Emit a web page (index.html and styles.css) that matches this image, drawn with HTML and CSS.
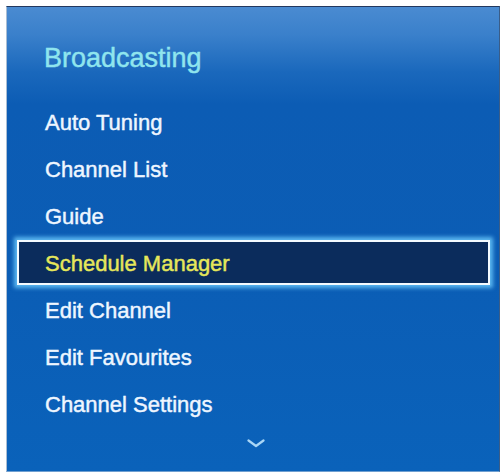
FILE: index.html
```html
<!DOCTYPE html>
<html lang="en">
<head>
<meta charset="utf-8">
<title>Broadcasting</title>
<link rel="stylesheet" href="styles.css">
</head>
<body>
<div class="panel">
  <div class="title">Broadcasting</div>
  <ul class="menu">
    <li class="item">Auto Tuning</li>
    <li class="item">Channel List</li>
    <li class="item">Guide</li>
    <li class="item selected">Schedule Manager</li>
    <li class="item">Edit Channel</li>
    <li class="item">Edit Favourites</li>
    <li class="item">Channel Settings</li>
  </ul>
  <div class="more">
    <svg class="chevron" width="18" height="9" viewBox="0 0 18 9"><polyline points="1.5,1.5 9,7 16.5,1.5" fill="none" stroke="#a9d6f6" stroke-width="2.2" stroke-linecap="round" stroke-linejoin="round"/></svg>
  </div>
</div>
</body>
</html>
```
FILE: styles.css
```css
html, body {
  margin: 0;
  padding: 0;
  background: #ffffff;
}
body {
  width: 504px;
  height: 475px;
  overflow: hidden;
  font-family: "Liberation Sans", Arial, sans-serif;
}
.panel {
  box-sizing: border-box;
  margin: 6px 0 0 6px;
  width: 494px;
  height: 466px;
  border-top: 1px solid #22385e;
  border-left: 1px solid #a9bdd3;
  border-right: 1px solid #3a5d88;
  border-bottom: 1px solid #6f9fd0;
  background: linear-gradient(to bottom, #4a8bd1 0%, #3a80cb 6%, #1a68bc 14%, #0c5cb4 21%, #0b5db5 55%, #0a62ba 100%);
  padding-top: 36px;
}
.title {
  font-size: 27px;
  line-height: 30px;
  color: #8fe5ee;
  padding-left: 37px;
  -webkit-text-stroke: 0.45px #8fe5ee;
}
.menu {
  list-style: none;
  margin: 26px 9px 0 10px;
  padding: 0;
  display: flex;
  flex-direction: column;
  gap: 2px;
}
.item {
  box-sizing: border-box;
  height: 45px;
  padding: 3px 0 0 26px;
  border: 2px solid transparent;
  font-size: 22px;
  line-height: 38px;
  color: #eef6ff;
  -webkit-text-stroke: 0.45px #eef6ff;
  white-space: nowrap;
}
.item.selected {
  background: #0b2c5c;
  border-color: #f4fbff;
  color: #e6e75a;
  -webkit-text-stroke: 0.45px #e6e75a;
  box-shadow: 0 0 4px 3px rgba(110, 205, 255, 0.8);
}
.more {
  display: flex;
  justify-content: center;
  padding-left: 6px;
  margin-top: 13px;
}
.chevron {
  display: block;
}
```
